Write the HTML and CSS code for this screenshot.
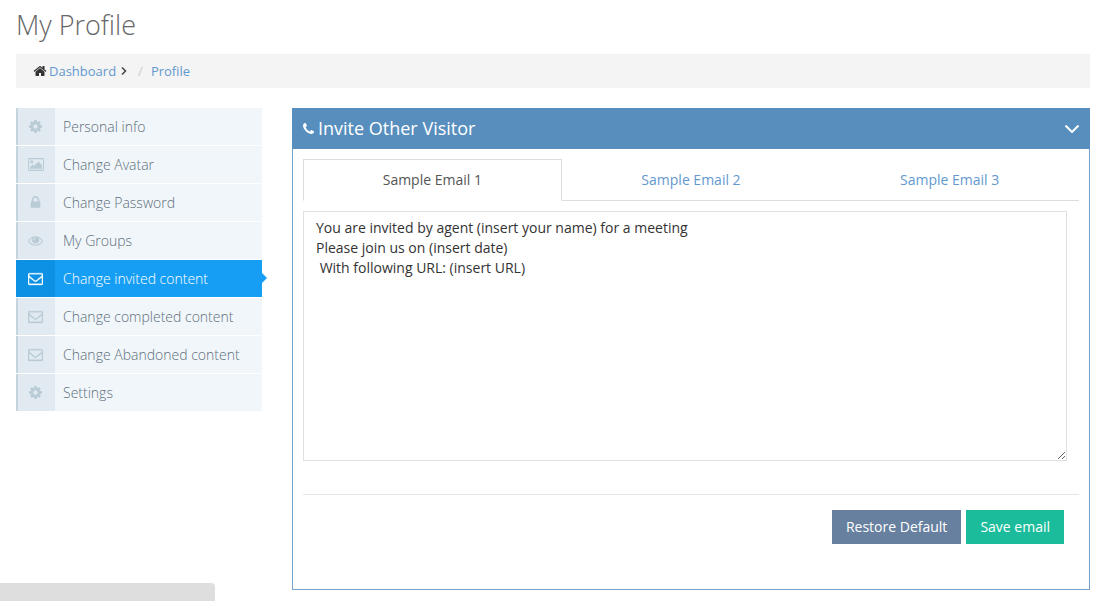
FILE: index.html
```html
<!DOCTYPE html>
<html lang="en">
<head>
<meta charset="utf-8">
<meta name="viewport" content="width=device-width, initial-scale=1">
<title>My Profile</title>
<link rel="stylesheet" href="styles.css">
</head>
<body>
<svg class="sprite" aria-hidden="true">
  <symbol id="i-cog" viewBox="0 128 1536 1536"><path d="M1024 896q0-106-75-181t-181-75-181 75-75 181 75 181 181 75 181-75 75-181zm512-109v222q0 12-8 23t-20 13l-185 28q-19 54-39 91 35 50 107 138 10 12 10 25t-9 23q-27 37-99 108t-94 71q-12 0-26-9l-138-108q-44 23-91 38-16 136-29 186-7 28-36 28h-222q-14 0-24.500-8.500t-11.500-21.500l-28-184q-49-16-90-37l-141 107q-10 9-25 9-14 0-25-11-126-114-165-168-7-10-7-23 0-12 8-23 15-21 51-66.500t54-70.500q-27-50-41-99l-183-27q-13-2-21-12.500t-8-23.500v-222q0-12 8-23t19-13l186-28q14-46 39-92-40-57-107-138-10-12-10-24 0-10 9-23 26-36 98.500-107.500t94.500-71.500q13 0 26 10l138 107q44-23 91-38 16-136 29-186 7-28 36-28h222q14 0 24.500 8.500t11.500 21.500l28 184q49 16 90 37l142-107q9-9 24-9 13 0 25 10 129 119 165 170 7 8 7 22 0 12-8 23-15 21-51 66.500t-54 70.500q26 50 41 98l183 28q13 2 21 12.500t8 23.500z"/></symbol>
  <symbol id="i-image" viewBox="0 0 1920 1792"><path d="M640 576q0 80-56 136t-136 56-136-56-56-136 56-136 136-56 136 56 56 136zm1024 384v448h-1408v-192l320-320 160 160 512-512zm96-704h-1600q-13 0-22.500 9.500t-9.500 22.500v1216q0 13 9.500 22.500t22.500 9.500h1600q13 0 22.500-9.500t9.500-22.500v-1216q0-13-9.500-22.500t-22.500-9.500zm160 32v1216q0 66-47 113t-113 47h-1600q-66 0-113-47t-47-113v-1216q0-66 47-113t113-47h1600q66 0 113 47t47 113z"/></symbol>
  <symbol id="i-lock" viewBox="0 0 1792 1792"><path d="M640 768h512v-192q0-106-75-181t-181-75-181 75-75 181v192zm832 96v576q0 40-28 68t-68 28h-960q-40 0-68-28t-28-68v-576q0-40 28-68t68-28h32v-192q0-184 132-316t316-132 316 132 132 316v192h32q40 0 68 28t28 68z"/></symbol>
  <symbol id="i-eye" viewBox="0 0 1792 1792"><path d="M1664 960q-152-236-381-353 61 104 61 225 0 185-131.500 316.500t-316.500 131.500-316.500-131.500-131.500-316.500q0-121 61-225-229 117-381 353 133 205 333.500 326.500t434.500 121.500 434.500-121.500 333.500-326.500zm-720-384q0-20-14-34t-34-14q-125 0-214.500 89.500t-89.500 214.500q0 20 14 34t34 14 34-14 14-34q0-86 61-147t147-61q20 0 34-14t14-34zm848 384q0 34-20 69-140 230-376.500 368.500t-499.500 138.500-499.500-139-376.500-368q-20-35-20-69t20-69q140-229 376.500-368t499.500-139 499.500 139 376.500 368q20 35 20 69z"/></symbol>
  <symbol id="i-mail" viewBox="0 0 1792 1792"><path d="M1664 1504v-768q-32 36-69 66-268 206-426 338-51 43-83 67t-86.500 48.500-102.500 24.500h-2q-48 0-102.500-24.500t-86.500-48.500-83-67q-158-132-426-338-37-30-69-66v768q0 13 9.500 22.500t22.500 9.500h1472q13 0 22.500-9.500t9.500-22.500zm0-1051v-24.500l-.5-13-3-12.500-5.500-9-9-7.500-14-2.500h-1472q-13 0-22.500 9.500t-9.500 22.500q0 168 147 284 193 152 401 317 6 5 35 29.500t46 37.500 44.500 31.500 50.500 27.500 43 9h2q20 0 43-9t50.500-27.500 44.500-31.500 46-37.500 35-29.500q208-165 401-317 54-43 100.500-115.500t46.500-131.500zm128-37v1088q0 66-47 113t-113 47h-1472q-66 0-113-47t-47-113v-1088q0-66 47-113t113-47h1472q66 0 113 47t47 113z"/></symbol>
  <symbol id="i-home" viewBox="0 0 1792 1792"><path d="M1472 992v480q0 26-19 45t-45 19h-384v-384h-256v384h-384q-26 0-45-19t-19-45v-480q0-1 .5-3t.5-3l575-474 575 474q1 2 1 6zm223-69l-62 74q-8 9-21 11h-3q-13 0-21-7l-692-577-692 577q-12 8-24 7-13-2-21-11l-62-74q-8-10-7-23.500t11-21.500l719-599q32-26 76-26t76 26l244 204v-195q0-14 9-23t23-9h192q14 0 23 9t9 23v408l219 182q10 8 11 21.500t-7 23.500z"/></symbol>
  <symbol id="i-phone" viewBox="192 128 1408 1408"><path d="M1600 1240q0 27-10 70.500t-21 68.500q-21 50-122 106-94 51-186 51-27 0-53-3.500t-57.500-12.500-47-14.500-55.500-20.500-49-18q-98-35-175-83-127-79-264-216t-216-264q-48-77-83-175-3-9-18-49t-20.500-55.500-14.500-47-12.500-57.500-3.500-53q0-92 51-186 56-101 106-122 25-11 68.500-21t70.500-10q14 0 21 3 18 6 53 76 11 19 30 54t35 63.500 31 53.500q3 4 17.500 25t21.500 35.500 7 28.500q0 20-28.500 50t-62 55-62 53-28.500 46q0 9 5 22.500t8.500 20.500 14 24 11.500 19q76 137 174 235t235 174q2 1 19 11.500t24 14 20.500 8.500 22.500 5q18 0 46-28.500t53-62 55-62 50-28.500q14 0 28.500 7t35.500 21.500 25 17.500q25 15 53.500 31t63.500 35 54 30q70 35 76 53 3 7 3 21z"/></symbol>
</svg>

<main class="page">
  <h1 class="page-title">My Profile</h1>

  <nav class="breadcrumb" aria-label="Breadcrumb">
    <svg class="crumb-home" aria-hidden="true"><use href="#i-home"/></svg>
    <a href="#">Dashboard</a>
    <svg class="crumb-angle" viewBox="0 0 6 8" aria-hidden="true"><path d="M1 0.500L4.500 4L1 7.500"/></svg>
    <span class="crumb-slash">/</span>
    <a href="#">Profile</a>
  </nav>

  <div class="columns">
    <nav class="side" aria-label="Profile">
      <a class="side-item" href="#"><span class="side-icon"><svg class="icon-cog"><use href="#i-cog"/></svg></span>Personal info</a>
      <a class="side-item" href="#"><span class="side-icon"><svg class="icon-wide"><use href="#i-image"/></svg></span>Change Avatar</a>
      <a class="side-item" href="#"><span class="side-icon"><svg><use href="#i-lock"/></svg></span>Change Password</a>
      <a class="side-item" href="#"><span class="side-icon"><svg><use href="#i-eye"/></svg></span>My Groups</a>
      <a class="side-item active" href="#" aria-current="page"><span class="side-icon"><svg class="icon-mail"><use href="#i-mail"/></svg></span>Change invited content</a>
      <a class="side-item" href="#"><span class="side-icon"><svg class="icon-mail"><use href="#i-mail"/></svg></span>Change completed content</a>
      <a class="side-item" href="#"><span class="side-icon"><svg class="icon-mail"><use href="#i-mail"/></svg></span>Change Abandoned content</a>
      <a class="side-item" href="#"><span class="side-icon"><svg class="icon-cog"><use href="#i-cog"/></svg></span>Settings</a>
    </nav>

    <section class="panel">
      <header class="panel-head">
        <svg class="phone" aria-hidden="true"><use href="#i-phone"/></svg>
        <h2 class="panel-title">Invite Other Visitor</h2>
        <button class="collapse" type="button" aria-label="Collapse">
          <svg viewBox="0 0 14 8" aria-hidden="true"><path d="M0.500 0.500L7 7L13.500 0.500"/></svg>
        </button>
      </header>
      <div class="panel-body">
        <div class="tabs" role="tablist">
          <button class="tab selected" type="button" role="tab" aria-selected="true">Sample Email 1</button>
          <button class="tab" type="button" role="tab" aria-selected="false">Sample Email 2</button>
          <button class="tab" type="button" role="tab" aria-selected="false">Sample Email 3</button>
        </div>
        <form class="editor">
          <textarea class="message" aria-label="Email content">You are invited by agent (insert your name) for a meeting
Please join us on (insert date)
 With following URL: (insert URL)</textarea>
          <div class="actions">
            <button class="btn restore" type="button">Restore Default</button>
            <button class="btn save" type="button">Save email</button>
          </div>
        </form>
      </div>
    </section>
  </div>
</main>
<div class="status"></div>
</body>
</html>
```

FILE: styles.css
```css
* {
  box-sizing: border-box;
}

body {
  margin: 0;
  background: #fff;
  color: #333;
  font: 14px/20px "Open Sans", sans-serif;
}

a {
  color: #6399cf;
  text-decoration: none;
}

button {
  margin: 0;
  border: 0;
  font: inherit;
  cursor: pointer;
}

svg {
  display: block;
  fill: currentColor;
}

.sprite {
  position: absolute;
  width: 0;
  height: 0;
}

.page {
  padding: 8px 10px 10px 16px;
}

.page-title {
  margin: 0 0 12px;
  color: #666;
  font-size: 27px;
  font-weight: 300;
  line-height: 34px;
}

.breadcrumb {
  display: flex;
  align-items: center;
  margin-bottom: 20px;
  padding: 7px 17px;
  background: #f4f4f4;
  font-size: 13px;
}

.crumb-home {
  width: 14px;
  height: 14px;
  margin-right: 2px;
}

.crumb-angle {
  width: 6px;
  height: 8px;
  margin: 0 11px 0 5px;
  fill: none;
  stroke: #444;
  stroke-width: 1.5;
}

.crumb-slash {
  margin-right: 8px;
  color: #ccc;
}

.columns {
  display: grid;
  grid-template-columns: repeat(12, minmax(0, 1fr));
  column-gap: 30px;
  align-items: start;
}

.side {
  grid-column: span 3;
  display: grid;
  row-gap: 1px;
}

.side-item {
  position: relative;
  display: flex;
  align-items: center;
  height: 37px;
  border-left: 2px solid #c4d5df;
  background: #f0f6fa;
  color: #5f6f7a;
  font-weight: 300;
}

.side-icon {
  display: flex;
  align-items: center;
  justify-content: center;
  width: 37px;
  height: 100%;
  margin-right: 8px;
  padding-right: 2px;
  background: #e0eaf0;
  color: #b9cbd5;
}

.side-icon svg {
  width: 15px;
  height: 15px;
}

.side-icon .icon-cog {
  width: 13px;
  height: 13px;
}

.side-icon .icon-wide {
  width: 16px;
}

.side-icon .icon-mail {
  stroke: currentColor;
  stroke-width: 40;
}

.side-item.active {
  border-color: #0c91e5;
  background: #169ef4;
  color: #fff;
}

.active .side-icon {
  background: #0c91e5;
  color: #fff;
}

.side-item.active::after {
  content: "";
  position: absolute;
  top: 13px;
  left: 100%;
  border: 5px solid transparent;
  border-left-color: #169ef4;
  border-right-width: 0;
}

.panel {
  grid-column: span 9;
  border: 1px solid #77a3cb;
  border-top: 0;
}

.panel-head {
  display: flex;
  align-items: center;
  height: 41px;
  margin: 0 -1px;
  padding: 0 11px;
  background: #578ebe;
  color: #fff;
}

.phone {
  width: 11px;
  height: 11px;
  margin-right: 4px;
}

.panel-title {
  flex: 1;
  margin: 0;
  padding-bottom: 2px;
  font-size: 18px;
  font-weight: 400;
}

.collapse {
  padding: 0;
  background: none;
  color: #fff;
}

.collapse svg {
  width: 14px;
  height: 8px;
  fill: none;
  stroke: currentColor;
  stroke-width: 2;
}

.panel-body {
  padding: 10px 10px 45px;
}

.tabs {
  display: grid;
  grid-template-columns: repeat(3, minmax(0, 1fr));
  margin-bottom: 10px;
}

.tab {
  height: 42px;
  padding: 0;
  border-bottom: 1px solid #ddd;
  background: #fff;
  color: #6399cf;
}

.tab.selected {
  border: 1px solid #ddd;
  border-bottom-color: transparent;
  color: #555;
}

.message {
  display: block;
  width: calc(100% - 12px);
  height: 250px;
  margin-bottom: 33px;
  padding: 6px 12px;
  border: 1px solid #e0e0e0;
  background: #fff;
  color: #333;
  font: inherit;
  resize: both;
}

.actions {
  display: flex;
  justify-content: flex-end;
  gap: 5px;
  padding: 15px 15px 0 0;
  border-top: 1px solid #e5e5e5;
}

.btn {
  padding: 7px 14px;
  color: #fff;
}

.restore {
  background: #67809f;
}

.save {
  background: #1bbc9b;
}

.status {
  position: fixed;
  bottom: 0;
  left: 0;
  width: 215px;
  height: 18px;
  border-radius: 0 4px 0 0;
  background: #dedede;
}
```
